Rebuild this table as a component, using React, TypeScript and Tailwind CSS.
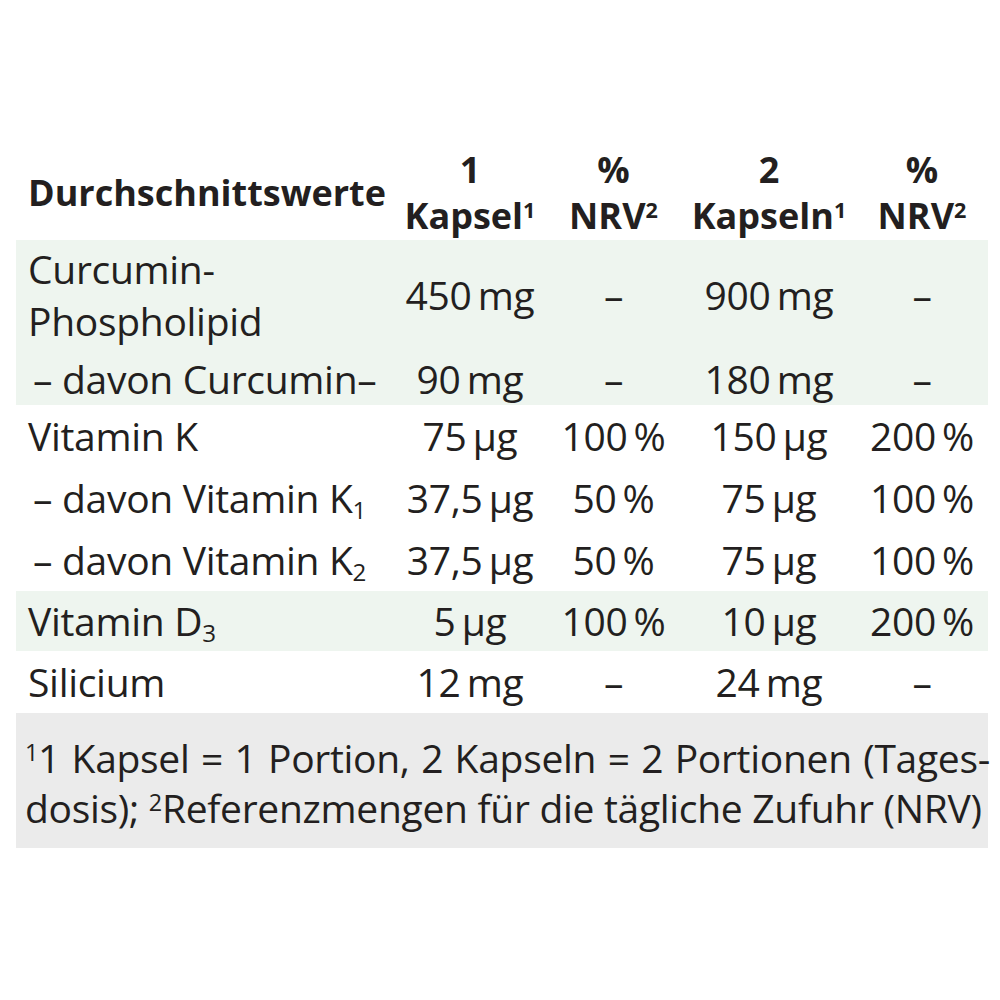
import React from "react";

type Row = {
  label: React.ReactNode;
  a: string;
  b: string;
  c: string;
  d: string;
  indent?: boolean;
};

const T = "\u2009";

function Cells({ row }: { row: Row }) {
  return (
    <>
      <div className={`whitespace-nowrap ${row.indent ? "pl-[17px]" : "pl-[12px]"}`}>{row.label}</div>
      <div className="text-center whitespace-nowrap">{row.a}</div>
      <div className="text-center whitespace-nowrap">{row.b}</div>
      <div className="text-center whitespace-nowrap">{row.c}</div>
      <div className="text-center whitespace-nowrap">{row.d}</div>
    </>
  );
}

const grid = "grid grid-cols-[379px_150px_137px_174px_132px] items-center";

function Head({ top, bottom }: { top: string; bottom: string }) {
  return (
    <div className="flex flex-col items-center">
      <span className="leading-[46px]">{top}</span>
      <span className="leading-[46px]">
        {bottom}
        <sup className="text-[60%]">{top === "%" ? "2" : "1"}</sup>
      </span>
    </div>
  );
}

export default function App() {
  const sub = (n: string) => <sub className="text-[62%] leading-none">{n}</sub>;

  return (
    <div className="min-h-screen bg-white pt-[145px] font-['Open_Sans',sans-serif] text-[#231f20]">
      <div className="mx-4 w-[972px]">
        {/* header */}
        <div className={`${grid} h-[95px] text-[36px] font-bold`}>
          <div className="pl-[12px]">Durchschnittswerte</div>
          <Head top="1" bottom="Kapsel" />
          <Head top="%" bottom="NRV" />
          <Head top="2" bottom="Kapseln" />
          <Head top="%" bottom="NRV" />
        </div>

        {/* body */}
        <div className="text-[39px] tracking-[-0.3px]">
          <div className="bg-[#eef5ef]">
            <div className={`${grid} h-[110px] leading-[52px]`}>
              <div className="pl-[12px]">
                Curcumin-<br />
                Phospholipid
              </div>
              <div className="text-center">{`450${T}mg`}</div>
              <div className="text-center">–</div>
              <div className="text-center">{`900${T}mg`}</div>
              <div className="text-center">–</div>
            </div>
            <div className={`${grid} h-[55px]`}>
              <Cells row={{ label: "– davon Curcumin–", a: `90${T}mg`, b: "–", c: `180${T}mg`, d: "–", indent: true }} />
            </div>
          </div>

          <div className={`${grid} h-[62px]`}>
            <Cells row={{ label: "Vitamin K", a: `75${T}µg`, b: `100${T}%`, c: `150${T}µg`, d: `200${T}%` }} />
          </div>
          <div className={`${grid} h-[62px]`}>
            <Cells row={{ label: <>– davon Vitamin K{sub("1")}</>, a: `37,5${T}µg`, b: `50${T}%`, c: `75${T}µg`, d: `100${T}%`, indent: true }} />
          </div>
          <div className={`${grid} h-[62px]`}>
            <Cells row={{ label: <>– davon Vitamin K{sub("2")}</>, a: `37,5${T}µg`, b: `50${T}%`, c: `75${T}µg`, d: `100${T}%`, indent: true }} />
          </div>
          <div className={`${grid} h-[60px] bg-[#eef5ef]`}>
            <Cells row={{ label: <>Vitamin D{sub("3")}</>, a: `5${T}µg`, b: `100${T}%`, c: `10${T}µg`, d: `200${T}%` }} />
          </div>
          <div className={`${grid} h-[62px]`}>
            <Cells row={{ label: "Silicium", a: `12${T}mg`, b: "–", c: `24${T}mg`, d: "–" }} />
          </div>
        </div>

        {/* footnote */}
        <div className="bg-[#ebebeb] pl-[9px] pt-[20px] pb-[15px] text-[39px] leading-[50px] tracking-[-0.3px]">
          <div className="whitespace-nowrap text-justify [text-align-last:justify] -mr-[2px]">
            <sup className="text-[60%]">1</sup>1 Kapsel = 1 Portion, 2 Kapseln = 2 Portionen (Tages-
          </div>
          <div className="whitespace-nowrap text-justify [text-align-last:justify] mr-[12px]">
            dosis); <sup className="text-[60%]">2</sup>Referenzmengen für die tägliche Zufuhr (NRV)
          </div>
        </div>
      </div>
    </div>
  );
}
